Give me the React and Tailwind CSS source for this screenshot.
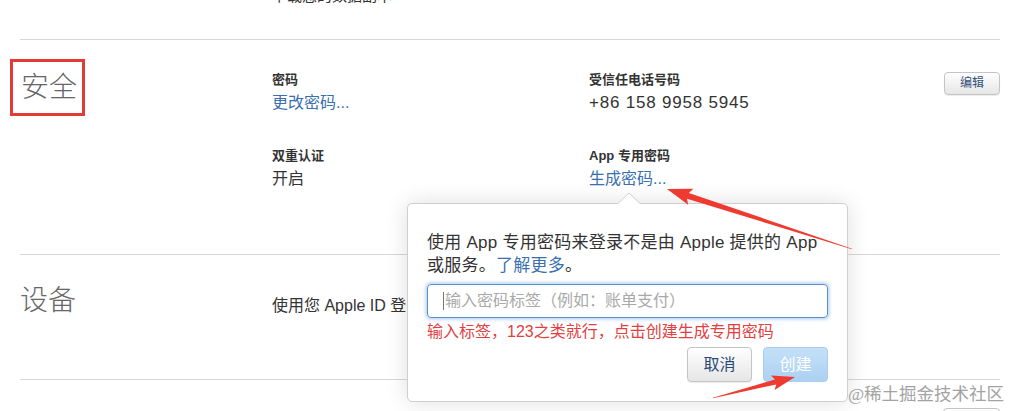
import React from "react";

const FONT = { fontFamily: '"Liberation Sans", "Noto Sans CJK SC", sans-serif' };

// tapered red annotation arrow, thin at the tail and fat near the head
const arrowPoints = (tail, tip, tailW, shaftW, headLen, headW) => {
  const dx = tip[0] - tail[0];
  const dy = tip[1] - tail[1];
  const len = Math.hypot(dx, dy);
  const ux = dx / len;
  const uy = dy / len;
  const nx = -uy;
  const ny = ux;
  const bx = tip[0] - ux * headLen;
  const by = tip[1] - uy * headLen;
  const pts = [
    [tail[0] + (nx * tailW) / 2, tail[1] + (ny * tailW) / 2],
    [bx + (nx * shaftW) / 2, by + (ny * shaftW) / 2],
    [bx - ux * 3 + (nx * headW) / 2, by - uy * 3 + (ny * headW) / 2],
    tip,
    [bx - ux * 3 - (nx * headW) / 2, by - uy * 3 - (ny * headW) / 2],
    [bx - (nx * shaftW) / 2, by - (ny * shaftW) / 2],
    [tail[0] - (nx * tailW) / 2, tail[1] - (ny * tailW) / 2],
  ];
  return pts.map((p) => p.join(",")).join(" ");
};

const GrayButton = ({ children, className = "" }) => (
  <button
    className={`rounded-[4px] border border-[#c4c4c4] bg-gradient-to-b from-white to-[#e6e6e6] shadow-[0_1px_1px_rgba(0,0,0,0.08)] ${className}`}
  >
    {children}
  </button>
);

const Field = ({ label, children, className = "" }) => (
  <div className={className}>
    <div className="text-[13px] leading-[18px] font-bold text-[#333]">{label}</div>
    <div className="text-[16px] leading-[28px] text-[#333]">{children}</div>
  </div>
);

export default function App() {
  return (
    <div className="relative w-[1013px] h-[411px] overflow-hidden bg-white" style={FONT}>
      <div className="pl-[20px] pr-[13px]">
        {/* tail of the previous section */}
        <div className="h-[39px] overflow-hidden flex">
          <div className="w-[252px]" />
          <div className="-mt-[14px] text-[15px] leading-[20px] text-[#333]">下载您的数据副本</div>
        </div>

        {/* 安全 */}
        <div className="h-[215px] border-t border-[#d8d8d8] flex">
          <div className="w-[252px] pt-[19px]">
            <div className="-ml-[10px] inline-block border-[3px] border-[#e63b35] pl-[8px] pr-[5px] py-[7px] text-[28px] leading-[37px] font-light text-[#666]">
              安全
            </div>
          </div>
          <div className="w-[317px] pt-[31px]">
            <Field label="密码">
              <span className="text-[#3a6fb0]">更改密码...</span>
            </Field>
            <Field label="双重认证" className="mt-[30px]">
              开启
            </Field>
          </div>
          <div className="flex-1 pt-[31px]">
            <Field label="受信任电话号码">
              <span className="text-[17px] tracking-[0.8px]">+86 158 9958 5945</span>
            </Field>
            <Field label="App 专用密码" className="mt-[30px]">
              <span className="text-[#3a6fb0]">生成密码...</span>
            </Field>
          </div>
          <div className="pt-[30px]">
            <GrayButton className="w-[56px] h-[23px] text-[12px] text-[#34517a]">编辑</GrayButton>
          </div>
        </div>

        {/* 设备 */}
        <div className="h-[125px] border-t border-[#d8d8d8] flex">
          <div className="w-[252px] pt-[27px] text-[28px] leading-[37px] font-light text-[#666]">设备</div>
          <div className="pt-[39px] text-[16px] leading-[24px] text-[#333]">使用您 Apple ID 登录的设备</div>
        </div>

        <div className="border-t border-[#d8d8d8] flex justify-end pt-[28px]">
          <GrayButton className="w-[57px] h-[23px]" />
        </div>
      </div>

      {/* popover */}
      <div className="absolute left-[407px] top-[203px] w-[441px] h-[199px] rounded-[5px] border border-[#cfcfcf] bg-white px-[19px] pt-[27px] shadow-[0_0_22px_rgba(0,0,0,0.13)]">
        <svg className="absolute -top-[12px] left-[209px]" width="24" height="13" viewBox="0 0 24 13">
          <path d="M0 12.5 L12 1 L24 12.5" fill="white" stroke="#cfcfcf" strokeWidth="1" />
          <rect x="0" y="12" width="24" height="2" fill="white" />
        </svg>
        <p className="text-[17px] leading-[23px] tracking-[0.25px] text-[#333]">
          使用 App 专用密码来登录不是由 Apple 提供的 App
          <br />
          或服务。<span className="text-[#3a6fb0]">了解更多</span>。
        </p>
        <div className="mt-[7px] h-[34px] rounded-[4px] border border-[#5a8fcb] shadow-[0_0_3px_2px_rgba(120,175,235,0.45)] flex items-center pl-[15px]">
          <span className="w-px h-[18px] bg-[#777]" />
          <span className="ml-[1px] text-[16px] text-[#a9a9a9]">输入密码标签（例如：账单支付）</span>
        </div>
        <div className="mt-[3px] text-[16px] leading-[22px] text-[#e2403f]">
          输入标签，123之类就行，点击创建生成专用密码
        </div>
        <div className="mt-[4px] flex justify-end gap-[11px]">
          <GrayButton className="w-[65px] h-[35px] text-[16px] text-[#2b4a78]">取消</GrayButton>
          <button className="w-[65px] h-[35px] rounded-[4px] border border-[#a9cdee] bg-gradient-to-b from-[#c4e0f8] to-[#acd1f1] text-[16px] text-white">
            创建
          </button>
        </div>
      </div>

      {/* annotations */}
      <svg className="absolute inset-0 pointer-events-none" width="1013" height="411">
        <polygon points={arrowPoints([852, 249], [667, 189], 0.6, 6, 22, 17)} fill="#ef3a2f" />
        <polygon points={arrowPoints([713, 398], [795, 377], 0.6, 5, 20, 15)} fill="#ef3a2f" />
      </svg>

      <div
        className="absolute left-[848px] top-[384px] text-[17.5px] leading-[20px] text-[#a3a3a3]"
        style={{ fontFamily: '"Liberation Serif", "Noto Sans CJK SC", serif' }}
      >
        @稀土掘金技术社区
      </div>
    </div>
  );
}
